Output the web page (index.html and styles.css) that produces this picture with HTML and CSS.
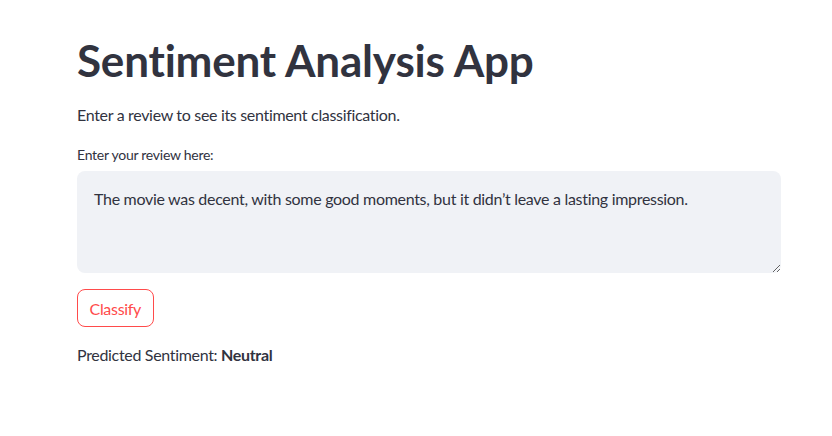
FILE: index.html
```html
<!DOCTYPE html>
<html>
<head>
<meta charset="utf-8">
<link rel="stylesheet" href="styles.css">
</head>
<body>
<main class="app">
  <h1 class="title">Sentiment Analysis App</h1>
  <p class="intro">Enter a review to see its sentiment classification.</p>
  <div class="field">
    <label class="label" for="review">Enter your review here:</label>
    <textarea id="review" class="review">The movie was decent, with some good moments, but it didn’t leave a lasting impression.</textarea>
  </div>
  <div class="actions">
    <button class="btn">Classify</button>
  </div>
  <p class="result">Predicted Sentiment: <strong>Neutral</strong></p>
</main>
</body>
</html>
```

FILE: styles.css
```css
html, body {
  margin: 0;
  padding: 0;
  background: #ffffff;
}
body {
  font-family: "Lato", "Open Sans", sans-serif;
  color: rgb(49, 51, 63);
  letter-spacing: -0.32px;
}
.app {
  width: 704px;
  padding: 34px 0 0 77px;
  display: flex;
  flex-direction: column;
}
.title {
  margin: 0;
  font-size: 44px;
  line-height: 53px;
  font-weight: 700;
  letter-spacing: -0.2px;
}
.intro {
  margin: 16px 0 0 0;
  font-size: 16px;
  line-height: 24px;
}
.field {
  margin-top: 18px;
  display: flex;
  flex-direction: column;
}
.label {
  font-size: 14px;
  line-height: 20px;
  margin-bottom: 6px;
  letter-spacing: -0.26px;
}
.review {
  box-sizing: border-box;
  width: 704px;
  height: 102px;
  background: rgb(240, 242, 246);
  border: none;
  border-radius: 8px;
  padding: 16px 17px;
  font-family: inherit;
  font-size: 16px;
  line-height: 24px;
  letter-spacing: -0.3px;
  color: rgb(49, 51, 63);
  resize: vertical;
  outline: none;
}
.actions {
  margin-top: 16px;
  display: flex;
}
.btn {
  height: 38px;
  padding: 0 11.5px;
  border: 1px solid rgb(255, 75, 75);
  border-radius: 8px;
  background: #fff;
  color: rgb(255, 75, 75);
  font-family: inherit;
  font-size: 16px;
  letter-spacing: -0.3px;
}
.result {
  margin: 16px 0 0 0;
  font-size: 16px;
  line-height: 24px;
}
.result strong {
  font-weight: 700;
}
```
